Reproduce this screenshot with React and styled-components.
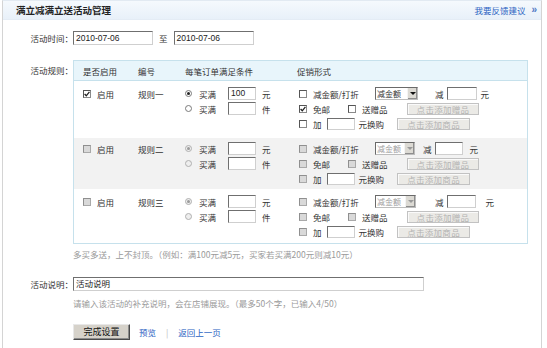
import React from 'react';
import styled, { createGlobalStyle } from 'styled-components';

const Global = createGlobalStyle`
  html, body { margin: 0; padding: 0; background: #fff; }
  body {
    font-family: "Noto Sans CJK SC", "Noto Sans", sans-serif;
    font-size: 8.5px;
    color: #333;
  }
  * { box-sizing: border-box; }
`;

const Page = styled.div`
  width: 540px;
  height: 348px;
  margin-left: 2px;
  border-left: 1px solid #d4d4d4;
  border-right: 1px solid #d4d4d4;
  border-top: 1px solid #e2eaf2;
  overflow: hidden;
`;

const Header = styled.div`
  height: 19px;
  display: flex;
  align-items: center;
  justify-content: space-between;
  padding: 0 4px 0 13px;
  background: linear-gradient(to bottom, #f5f9fd 0%, #e8f0f9 100%);
  border-bottom: 1px solid #e4ecf5;
`;

const Title = styled.div`
  font-weight: bold;
  font-size: 9.5px;
  color: #222;
`;

const FeedbackLink = styled.a`
  color: #2a62c2;
  font-size: 8.5px;
  text-decoration: none;
  display: flex;
  align-items: center;
  gap: 6px;
`;

const Raquo = styled.span`
  color: #4f78c4;
  font-family: "Liberation Sans", sans-serif;
  font-size: 10px;
  font-weight: bold;
  line-height: 1;
`;

const Body = styled.div`
  padding-top: 11px;
`;

const Field = styled.div`
  display: grid;
  grid-template-columns: 70px 1fr;
  align-items: start;
  margin-top: ${p => p.$mt || 0}px;
`;

const Label = styled.div`
  text-align: right;
  line-height: ${p => p.$lh}px;
  white-space: nowrap;
  color: #333;
`;

const Inline = styled.div`
  display: flex;
  align-items: center;
  height: ${p => p.$h || 14}px;
`;

const TextInput = styled.div`
  width: ${p => p.$w}px;
  height: ${p => p.$h || 13}px;
  border: 1px solid #cfcfcf;
  border-top-color: #6f6f6f;
  border-left-color: #6f6f6f;
  background: #fff;
  font-family: "Liberation Sans", "Noto Sans CJK SC", sans-serif;
  font-size: 8.5px;
  line-height: ${p => (p.$h || 13) - 2}px;
  padding-left: 2px;
  color: #222;
  white-space: nowrap;
  flex: none;
`;

const Sep = styled.span`
  margin: 0 6px;
`;

const Table = styled.div`
  width: 455px;
  border: 1px solid #c6e1ec;
`;

const Cols = styled.div`
  display: grid;
  grid-template-columns: 55px 47px 112px 1fr;
  padding-left: 9px;
`;

const HeadRow = styled(Cols)`
  height: 20px;
  align-items: center;
  background: #e8f5fb;
  border-bottom: 1px solid #c6e1ec;
  color: #333;
`;

const RuleRow = styled(Cols)`
  background: ${p => (p.$shade ? '#f2f2f2' : '#fff')};
  padding-top: ${p => p.$pt}px;
  padding-bottom: ${p => p.$pb}px;
`;

const Cell = styled.div`
  display: flex;
  flex-direction: column;
`;

const Line = styled.div`
  display: flex;
  align-items: center;
  height: 15px;
  white-space: nowrap;
`;

const Box = styled.span`
  width: 8px;
  height: 8px;
  flex: none;
  display: inline-flex;
  align-items: center;
  justify-content: center;
  border: 1px solid ${p => (p.$off ? '#a9a9a9' : '#8a8a8a')};
  border-top-color: ${p => (p.$off ? '#8f8f8f' : '#555')};
  border-left-color: ${p => (p.$off ? '#8f8f8f' : '#555')};
  background: ${p => (p.$off ? '#d9d9d9' : '#fff')};
  margin-left: ${p => p.$ml || 0}px;
  margin-right: 6px;
`;

const Radio = styled.span`
  width: 7px;
  height: 7px;
  flex: none;
  border-radius: 50%;
  border: 1px solid ${p => (p.$off ? '#b0b0b0' : '#7a7a7a')};
  background: ${p => (p.$off ? '#eeeeee' : '#fff')};
  display: inline-flex;
  align-items: center;
  justify-content: center;
  margin-right: 7px;
  &::after {
    content: '';
    width: 3px;
    height: 3px;
    border-radius: 50%;
    background: ${p => (p.$checked ? (p.$off ? '#9a9a9a' : '#222') : 'transparent')};
  }
`;

const Gap = styled.span`
  display: inline-block;
  flex: none;
  width: ${p => p.$w}px;
`;

const Slot = styled.span`
  display: inline-flex;
  align-items: center;
  flex: none;
  width: ${p => p.$w}px;
`;

const Select = styled.div`
  width: ${p => p.$w}px;
  height: 13px;
  flex: none;
  display: flex;
  align-items: stretch;
  border: 1px solid #bdbdbd;
  border-top-color: #6a6a6a;
  border-left-color: #6a6a6a;
  background: #fff;
`;

const SelectText = styled.span`
  flex: 1;
  padding-left: 1px;
  font-size: 8px;
  line-height: 11px;
  white-space: nowrap;
  color: ${p => (p.$off ? '#a0a0a0' : '#333')};
`;

const SelectArrow = styled.span`
  width: 10px;
  flex: none;
  background: #dcdad4;
  border-left: 1px solid #f4f4f4;
  box-shadow: inset -1px -1px 0 #8e8e8e;
  display: flex;
  align-items: center;
  justify-content: center;
  &::after {
    content: '';
    border-left: 3px solid transparent;
    border-right: 3px solid transparent;
    border-top: 3px solid ${p => (p.$off ? '#999' : '#111')};
  }
`;

const AddButton = styled.div`
  width: ${p => p.$w}px;
  height: 12px;
  flex: none;
  background: #ebeae6;
  border: 1px solid #c2c2c2;
  box-shadow: inset 1px 1px 0 #fafafa;
  color: #b3b3b3;
  font-size: 8.5px;
  line-height: 10px;
  text-align: center;
  letter-spacing: 0.3px;
`;

const Note = styled.div`
  color: #9a9a9a;
  line-height: 15px;
  margin: ${p => p.$mt}px 0 0 70px;
  white-space: nowrap;
`;

const Actions = styled.div`
  display: flex;
  align-items: center;
  margin: 13px 0 0 70px;
`;

const SubmitButton = styled.div`
  width: 57px;
  height: 16px;
  background: #d6d2ca;
  border: 1px solid #4a4a4a;
  border-top-color: #e8e8e8;
  border-left-color: #e8e8e8;
  box-shadow: inset -1px -1px 0 #8c8c8c;
  color: #111;
  font-size: 9px;
  line-height: 14px;
  text-align: center;
`;

const LinkText = styled.a`
  color: #2a62c2;
  text-decoration: none;
  margin-left: ${p => p.$ml || 0}px;
`;

const Pipe = styled.span`
  color: #b8b8b8;
  margin-left: 10px;
`;

function Check({ checked, off, ml }) {
  return (
    <Box $off={off} $ml={ml}>
      {checked && (
        <svg width="6" height="6" viewBox="0 0 6 6">
          <path d="M0.6 3 L2.3 4.8 L5.4 0.9" fill="none" stroke="#222" strokeWidth="1.3" />
        </svg>
      )}
    </Box>
  );
}

const rules = [
  { name: '规则一', on: true, shade: false, pt: 5, pb: 7, buy: '100', free: true,
    sel: 43, g1: 17, inW: 30, g2: 4 },
  { name: '规则二', on: false, shade: true, pt: 3, pb: 3, buy: '', free: false,
    sel: 40, g1: 8, inW: 28, g2: 7 },
  { name: '规则三', on: false, shade: false, pt: 5, pb: 4, buy: '', free: false,
    sel: 41, g1: 19, inW: 29, g2: 10 },
];

function Rule({ r }) {
  const off = !r.on;
  return (
    <RuleRow $shade={r.shade} $pt={r.pt} $pb={r.pb}>
      <Cell>
        <Line><Check checked={r.on} off={off} />启用</Line>
      </Cell>
      <Cell>
        <Line>{r.name}</Line>
      </Cell>
      <Cell>
        <Line>
          <Radio $checked $off={off} />买满<Gap $w={12} />
          <TextInput $w={28} $h={13}>{r.buy}</TextInput><Gap $w={6} />元
        </Line>
        <Line>
          <Radio $off={off} />买满<Gap $w={12} />
          <TextInput $w={28} $h={13} /><Gap $w={6} />件
        </Line>
      </Cell>
      <Cell>
        <Line>
          <Slot $w={78}><Check off={off} ml={2} />减金额/打折</Slot>
          <Select $w={r.sel}>
            <SelectText $off={off}>减金额</SelectText>
            <SelectArrow $off={off} />
          </Select>
          <Gap $w={r.g1} />减<Gap $w={3} />
          <TextInput $w={r.inW} $h={13} /><Gap $w={r.g2} />元
        </Line>
        <Line>
          <Slot $w={51}><Check checked={r.free} off={off} ml={2} />免邮</Slot>
          <Slot $w={59}><Check off={off} />送赠品</Slot>
          <AddButton $w={72}>点击添加赠品</AddButton>
        </Line>
        <Line>
          <Check off={off} ml={2} />加<Gap $w={5} />
          <TextInput $w={28} $h={12} /><Gap $w={4} />元换购<Gap $w={13} />
          <AddButton $w={73}>点击添加商品</AddButton>
        </Line>
      </Cell>
    </RuleRow>
  );
}

export default function App() {
  return (
    <>
      <Global />
      <Page>
        <Header>
          <Title>满立减满立送活动管理</Title>
          <FeedbackLink href="#">我要反馈建议<Raquo>»</Raquo></FeedbackLink>
        </Header>
        <Body>
          <Field>
            <Label $lh={14}>活动时间：</Label>
            <Inline $h={14}>
              <TextInput $w={80} $h={14}>2010-07-06</TextInput>
              <Sep>至</Sep>
              <TextInput $w={80} $h={14}>2010-07-06</TextInput>
            </Inline>
          </Field>
          <Field $mt={15}>
            <Label $lh={20}>活动规则：</Label>
            <Table>
              <HeadRow>
                <span>是否启用</span>
                <span>编号</span>
                <span>每笔订单满足条件</span>
                <span>促销形式</span>
              </HeadRow>
              {rules.map(r => <Rule key={r.name} r={r} />)}
            </Table>
          </Field>
          <Note $mt={3}>多买多送，上不封顶。（例如：满100元减5元，买家若买满200元则减10元）</Note>
          <Field $mt={15}>
            <Label $lh={14}>活动说明：</Label>
            <Inline $h={14}>
              <TextInput $w={351} $h={14}>活动说明</TextInput>
            </Inline>
          </Field>
          <Note $mt={5}>请输入该活动的补充说明，会在店铺展现。（最多50个字，已输入4/50）</Note>
          <Actions>
            <SubmitButton>完成设置</SubmitButton>
            <LinkText href="#" $ml={9}>预览</LinkText>
            <Pipe>|</Pipe>
            <LinkText href="#" $ml={10}>返回上一页</LinkText>
          </Actions>
        </Body>
      </Page>
    </>
  );
}
